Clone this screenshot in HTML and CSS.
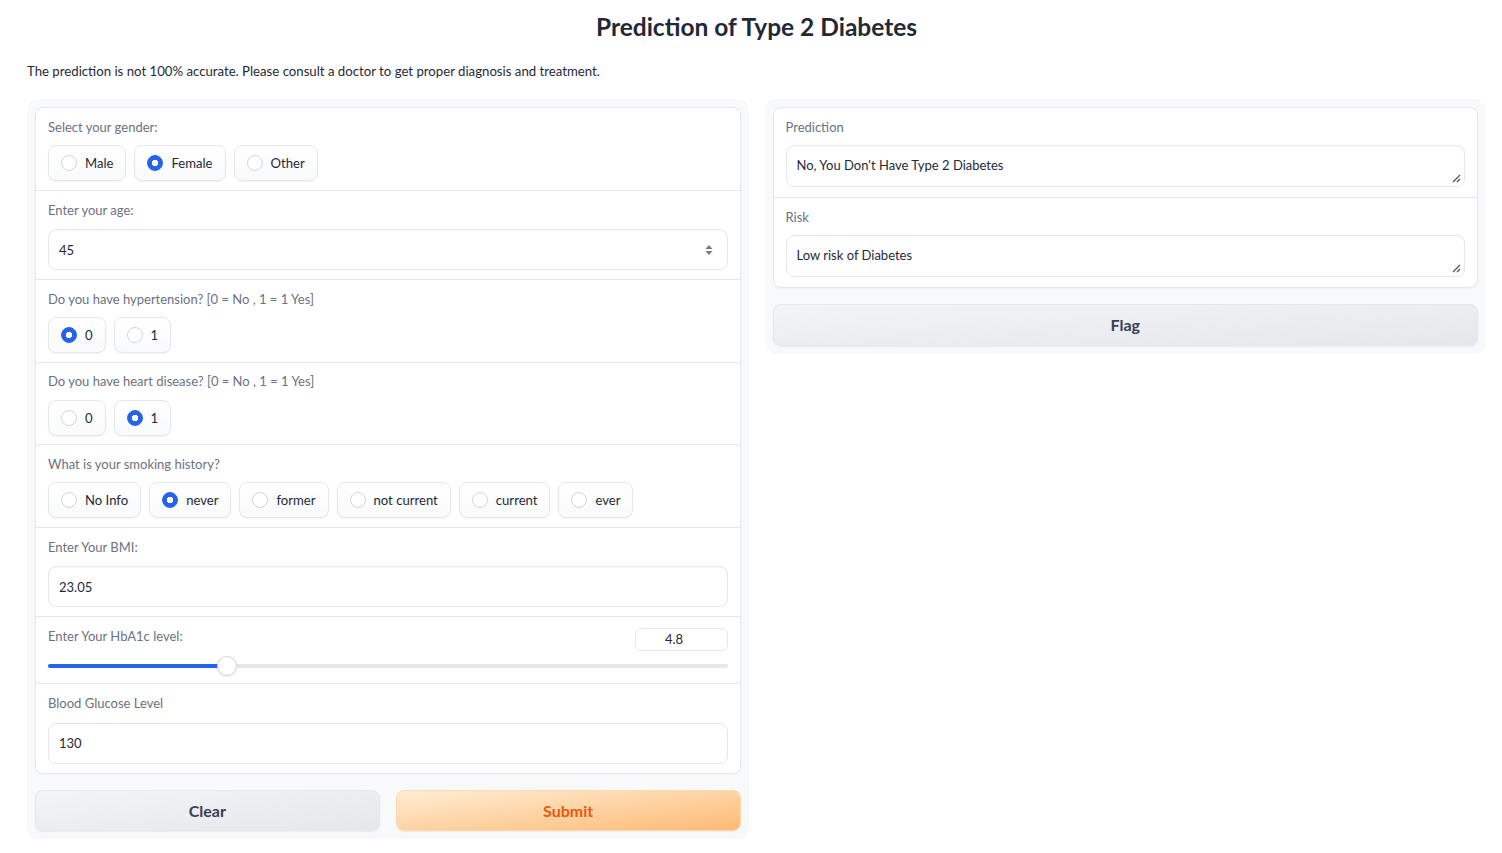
FILE: index.html
```html
<!DOCTYPE html>
<html lang="en">
<head>
<meta charset="utf-8">
<title>Prediction of Type 2 Diabetes</title>
<link rel="stylesheet" href="styles.css">
</head>
<body>
<div class="app">
  <h1 class="title">Prediction of Type 2 Diabetes</h1>
  <p class="desc">The prediction is not 100% accurate. Please consult a doctor to get proper diagnosis and treatment.</p>
  <div class="cols">
    <div class="panel">
      <div class="form">
        <div class="block radio-block">
          <div class="label">Select your gender:</div>
          <div class="chips">
            <label class="chip"><span class="dot"></span>Male</label>
            <label class="chip"><span class="dot on"></span>Female</label>
            <label class="chip"><span class="dot"></span>Other</label>
          </div>
        </div>
        <div class="block input-block">
          <div class="label">Enter your age:</div>
          <div class="field">
            <span class="val">45</span>
            <svg class="spin" width="10" height="14" viewBox="0 0 10 14"><path d="M5 2 L8.5 6 L1.5 6 Z" fill="#7b7b7b"/><path d="M5 12 L8.5 8 L1.5 8 Z" fill="#7b7b7b"/></svg>
          </div>
        </div>
        <div class="block radio-block">
          <div class="label">Do you have hypertension? [0 = No , 1 = 1 Yes]</div>
          <div class="chips">
            <label class="chip"><span class="dot on"></span>0</label>
            <label class="chip"><span class="dot"></span>1</label>
          </div>
        </div>
        <div class="block radio-block">
          <div class="label">Do you have heart disease? [0 = No , 1 = 1 Yes]</div>
          <div class="chips">
            <label class="chip"><span class="dot"></span>0</label>
            <label class="chip"><span class="dot on"></span>1</label>
          </div>
        </div>
        <div class="block radio-block">
          <div class="label">What is your smoking history?</div>
          <div class="chips">
            <label class="chip"><span class="dot"></span>No Info</label>
            <label class="chip"><span class="dot on"></span>never</label>
            <label class="chip"><span class="dot"></span>former</label>
            <label class="chip"><span class="dot"></span>not current</label>
            <label class="chip"><span class="dot"></span>current</label>
            <label class="chip"><span class="dot"></span>ever</label>
          </div>
        </div>
        <div class="block input-block">
          <div class="label">Enter Your BMI:</div>
          <div class="field"><span class="val">23.05</span></div>
        </div>
        <div class="block slider-block">
          <div class="slider-head">
            <div class="label">Enter Your HbA1c level:</div>
            <div class="numbox">4.8</div>
          </div>
          <div class="slider">
            <div class="track"><div class="fill" style="width: 26.4%"></div></div>
            <div class="thumb" style="left: 26.4%"></div>
          </div>
        </div>
        <div class="block input-block">
          <div class="label">Blood Glucose Level</div>
          <div class="field"><span class="val">130</span></div>
        </div>
      </div>
      <div class="btns">
        <button class="btn secondary">Clear</button>
        <button class="btn primary">Submit</button>
      </div>
    </div>
    <div class="panel">
      <div class="form">
        <div class="block output-block">
          <div class="label">Prediction</div>
          <div class="field area"><span class="val">No, You Don't Have Type 2 Diabetes</span>
            <svg class="resize" width="10" height="10" viewBox="0 0 10 10"><path d="M9 2 L2 9 M9 6 L6 9" stroke="#555" stroke-width="1.3" fill="none"/></svg>
          </div>
        </div>
        <div class="block output-block">
          <div class="label">Risk</div>
          <div class="field area"><span class="val">Low risk of Diabetes</span>
            <svg class="resize" width="10" height="10" viewBox="0 0 10 10"><path d="M9 2 L2 9 M9 6 L6 9" stroke="#555" stroke-width="1.3" fill="none"/></svg>
          </div>
        </div>
      </div>
      <div class="btns single">
        <button class="btn secondary flag">Flag</button>
      </div>
    </div>
  </div>
</div>
</body>
</html>
```
FILE: styles.css
```css
* { box-sizing: border-box; }
html, body { margin: 0; background: #ffffff; }
body {
  font-family: Lato, "Noto Sans", "Liberation Sans", sans-serif;
  color: #1f2937;
  font-size: 13.2px;
}
.app {
  padding: 11px 16px 0 27px;
}
.title {
  margin: 0;
  text-align: center;
  font-size: 24.5px;
  line-height: 32px;
  font-weight: 700;
  color: #1f2937;
}
.desc {
  margin: 18px 0 18px;
  font-size: 13.2px;
  line-height: 20px;
  color: #1f2937;
}
.cols {
  display: grid;
  grid-template-columns: 1fr 1fr;
  gap: 16px;
  align-items: start;
}
.panel {
  background: #f8f9fb;
  border-radius: 10px;
  padding: 8px;
}
.form {
  background: #ffffff;
  border: 1px solid #e5e7eb;
  border-radius: 8px;
  overflow: hidden;
  box-shadow: 0 1px 2px rgba(0,0,0,0.03);
}
.block {
  padding: 8.5px 12px 8.5px;
}
.block + .block { border-top: 1px solid #e5e7eb; }
.label {
  font-size: 13px;
  line-height: 20px;
  color: #6b7280;
}
.radio-block .label { margin-bottom: 8.5px; }
.chips {
  display: flex;
  flex-wrap: wrap;
  gap: 8px;
}
.chip {
  display: flex;
  align-items: center;
  gap: 8px;
  height: 36px;
  padding: 0 12px;
  border: 1px solid #e5e7eb;
  border-radius: 8px;
  background: linear-gradient(#ffffff, #f9fafb);
  box-shadow: 0 1px 2px rgba(0,0,0,0.05);
  font-size: 13.1px;
  color: #1f2937;
}
.dot {
  width: 16px;
  height: 16px;
  border-radius: 50%;
  border: 1px solid #d1d5db;
  background: #ffffff;
  flex: none;
}
.dot.on {
  border-color: #2563eb;
  background: radial-gradient(circle, #ffffff 0 3px, #2563eb 3.5px);
}
.input-block { padding-top: 9px; padding-bottom: 9px; }
.input-block .label { margin-bottom: 9.5px; }
.output-block { padding-top: 8.5px; padding-bottom: 10px; }
.output-block + .output-block { padding-top: 9px; }
.output-block .label { margin-bottom: 8.5px; }
.output-block .field { height: 41.5px; }
.field {
  position: relative;
  display: flex;
  align-items: center;
  justify-content: space-between;
  height: 41px;
  padding: 0 10px;
  border: 1px solid #e5e7eb;
  border-radius: 8px;
  background: #ffffff;
  box-shadow: inset 0 1px 2px rgba(0,0,0,0.03);
  font-size: 13px;
  color: #1f2937;
}
.area { align-items: flex-start; padding-top: 11px; }
.spin { margin-right: 3px; }
.resize {
  position: absolute;
  right: 3px;
  bottom: 3px;
}
.slider-block { padding: 9px 12px 7px; }
.slider-head {
  display: flex;
  justify-content: space-between;
  align-items: flex-start;
  height: 24px;
}
.numbox {
  margin-top: 2px;
  width: 93px;
  height: 23px;
  padding-right: 14px;
  border: 1px solid #e5e7eb;
  border-radius: 6px;
  text-align: center;
  font-size: 13px;
  line-height: 21px;
  color: #1f2937;
}
.slider {
  position: relative;
  margin-top: 6px;
  height: 20px;
  display: flex;
  align-items: center;
}
.track {
  width: 100%;
  height: 4px;
  border-radius: 2px;
  background: #e5e7eb;
  overflow: hidden;
}
.fill {
  height: 100%;
  background: #2563eb;
}
.thumb {
  position: absolute;
  top: 0;
  width: 20px;
  height: 20px;
  margin-left: -10px;
  border-radius: 50%;
  background: #ffffff;
  border: 1px solid #d1d5db;
  box-shadow: 0 1px 2px rgba(0,0,0,0.08);
}
.btns {
  display: grid;
  grid-template-columns: 1fr 1fr;
  gap: 16px;
  margin-top: 16px;
}
.btns.single { grid-template-columns: 1fr; }
.btn {
  height: 41px;
  border-radius: 8px;
  font-family: inherit;
  font-size: 16px;
  font-weight: 700;
  cursor: pointer;
  box-shadow: 0 1px 2px rgba(0,0,0,0.06);
}
.btn.secondary {
  border: 1px solid #e5e7eb;
  background: linear-gradient(to bottom right, #f3f4f6, #e5e7eb);
  color: #374151;
}
.btn.flag { height: 42px; }
.btn.primary {
  border: 1px solid #fed7aa;
  background: linear-gradient(to bottom right, #ffedd5, #fdba74);
  color: #ea580c;
}
```
